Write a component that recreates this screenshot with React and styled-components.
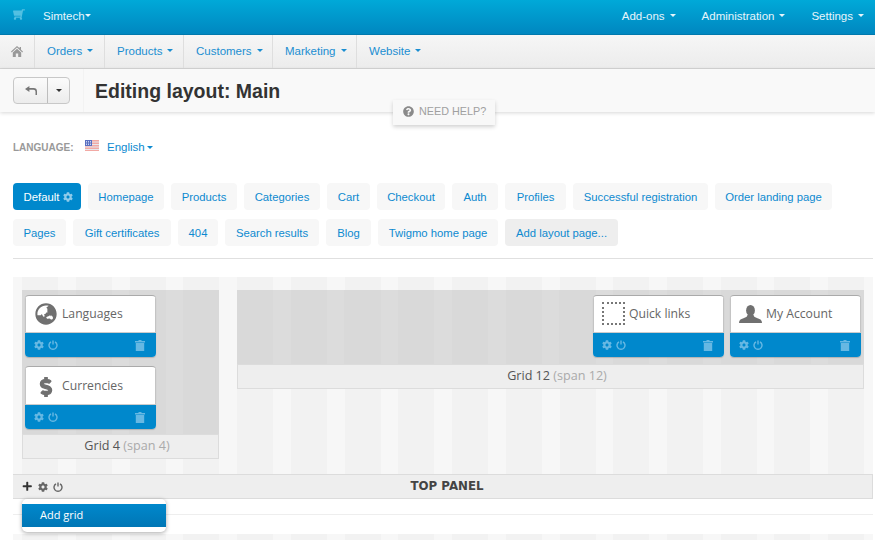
import React from "react"
import styled, {createGlobalStyle} from "styled-components"
import {FaCog, FaDollarSign, FaGlobeAsia, FaPlus, FaQuestionCircle, FaShoppingCart} from "react-icons/fa"

const GlobalStyle = createGlobalStyle`
  html, body {
    margin: 0;
    padding: 0;
    background: #fff;
  }
  body {
    width: 875px;
    height: 540px;
    overflow: hidden;
    font-family: "Liberation Sans", Arial, sans-serif;
    font-size: 11px;
    color: #333;
  }
`

const StyledApp = styled.div`
  position: relative;
  width: 875px;
  height: 540px;
  overflow: hidden;
`
const TopBar = styled.div`
  display: flex;
  justify-content: space-between;
  align-items: center;
  box-sizing: border-box;
  height: 35px;
  padding: 0 11px 3px 13px;
  background: linear-gradient(to bottom, #00a9d8, #0087c0);
  border-bottom: 1px solid #0079ad;
  color: #e6f5fb;
  font-size: 11.5px;
`
const TopGroup = styled.div`
  display: flex;
  align-items: center;
  gap: ${({$gap}) => $gap}px;
`
const CartIcon = styled(FaShoppingCart)`
  width: 12px;
  height: 11px;
  margin-top: -3px;
  color: #52c0e2;
  transform: scaleX(-1);
`
const TopItem = styled.span`
  display: inline-flex;
  align-items: center;
  gap: ${({$caretGap}) => $caretGap}px;
`
const Caret = styled.i`
  display: inline-block;
  width: 0;
  height: 0;
  border-left: 3.5px solid transparent;
  border-right: 3.5px solid transparent;
  border-top: 3.5px solid ${({$color}) => $color};
`
const MainNav = styled.div`
  display: flex;
  box-sizing: border-box;
  height: 34px;
  background: linear-gradient(to bottom, #f6f6f6, #ececec);
  border-bottom: 1px solid #d6d6d6;
`
const HomeCell = styled.div`
  display: flex;
  justify-content: center;
  align-items: center;
  box-sizing: border-box;
  width: 35px;
  padding-bottom: 1px;
  border-right: 1px solid #dedede;
  color: #999;
`
const NavItem = styled.div`
  display: flex;
  align-items: center;
  gap: 5px;
  box-sizing: border-box;
  width: ${({$width}) => $width}px;
  padding: 0 0 2px 12px;
  border-right: ${({$last}) => $last ? "none" : "1px solid #dedede"};
  color: #1a8ed1;
  font-size: 11.5px;
`
const ActionBar = styled.div`
  display: flex;
  align-items: center;
  box-sizing: border-box;
  height: 43px;
  padding-left: 13px;
  background: #f9f9f9;
  box-shadow: 0 1px 4px rgba(0, 0, 0, 0.16);
`
const BackGroup = styled.div`
  display: flex;
  box-sizing: border-box;
  width: 57px;
  height: 27px;
  border: 1px solid #c8c8c8;
  border-radius: 4px;
  background: linear-gradient(to bottom, #fbfbfb, #ececec);
`
const BackPart = styled.div`
  display: flex;
  justify-content: center;
  align-items: center;
  width: ${({$width}) => $width}px;
  border-right: ${({$divider}) => $divider ? "1px solid #bdbdbd" : "none"};
`
const ActionDivider = styled.div`
  width: 1px;
  height: 43px;
  margin: 0 11px 0 13px;
  background: #f3f3f3;
`
const Title = styled.h1`
  margin: 1px 0 0;
  font-size: 19.5px;
  font-weight: bold;
  color: #333;
`
const HelpTab = styled.div`
  position: absolute;
  top: 100px;
  left: 393px;
  display: flex;
  align-items: center;
  gap: 5px;
  box-sizing: border-box;
  width: 102px;
  height: 25px;
  padding: 0 0 3px 10px;
  background: #f8f8f8;
  box-shadow: 0 2px 4px rgba(0, 0, 0, 0.18);
  color: #a0a0a0;
  font-size: 10.8px;
  svg {
    color: #8a8a8a;
    font-size: 11px;
  }
`
const Content = styled.div`
  padding: 0 2px 0 13px;
`
const LanguageRow = styled.div`
  display: flex;
  align-items: center;
  height: 18px;
  margin: 26px 0 27px;
`
const LanguageLabel = styled.span`
  width: 72px;
  color: #999;
  font-size: 10px;
  font-weight: bold;
`
const Flag = styled.svg`
  width: 14px;
  height: 11px;
  margin: -4px 8px 0 0;
`
const LanguageLink = styled.span`
  display: inline-flex;
  align-items: center;
  gap: 2px;
  color: #0d8ad0;
  font-size: 11.5px;
`
const Tabs = styled.div`
  display: flex;
  flex-wrap: wrap;
  gap: 9px 7px;
  padding-bottom: 12px;
  border-bottom: 1px solid #e0e0e0;
`
const Tab = styled.div`
  display: flex;
  justify-content: center;
  align-items: center;
  gap: 4px;
  box-sizing: border-box;
  width: ${({$width}) => $width}px;
  height: 27px;
  padding-left: ${({$active}) => $active ? 3 : 0}px;
  border-radius: 4px;
  background: ${({$active, $muted}) => $active ? "#0088cc" : $muted ? "#eeeeee" : "#f7f7f7"};
  color: ${({$active}) => $active ? "#fff" : "#0d8ad0"};
  font-size: 11.3px;
  white-space: nowrap;
  svg {
    color: #8fcbea;
    font-size: 10px;
  }
`
const outerStripes = `repeating-linear-gradient(to right, #f7f7f7 0, #f7f7f7 9px, #f2f2f2 9px, #f2f2f2 45px, #f7f7f7 45px, #f7f7f7 53.75px)`
const innerStripes = `repeating-linear-gradient(to right, #d9d9d9 0, #d9d9d9 36px, #dcdcdc 36px, #dcdcdc 53.75px)`

const Stage = styled.div`
  display: flex;
  gap: 18px;
  box-sizing: border-box;
  height: 197px;
  margin-top: 18px;
  padding: 13px 9px 0;
  background: ${outerStripes};
`
const Grid = styled.div`
  display: flex;
  flex-direction: column;
  flex: ${({$span}) => $span === 4 ? "0 0 197px" : "1"};
  height: ${({$span}) => $span === 4 ? 169 : 99}px;
`
const GridBody = styled.div`
  flex: 1;
  display: flex;
  flex-direction: ${({$span}) => $span === 4 ? "column" : "row"};
  justify-content: ${({$span}) => $span === 4 ? "flex-start" : "flex-end"};
  gap: ${({$span}) => $span === 4 ? 9 : 6}px;
  padding: 5px 3px;
  background: ${innerStripes};
`
const GridLabel = styled.div`
  box-sizing: border-box;
  height: 25px;
  padding-left: 13px;
  border: 1px solid #dcdcdc;
  background: #eeeeee;
  text-align: center;
  line-height: 22px;
  font-family: "Open Sans", sans-serif;
  font-size: 12.6px;
  color: #555;
  span {
    color: #aaa;
  }
`
const Block = styled.div`
  display: flex;
  flex-direction: column;
  box-sizing: border-box;
  width: 131px;
  height: ${({$tall}) => $tall ? 63 : 62}px;
  border-radius: 4px;
  overflow: hidden;
  background: #fff;
  border-top: 1px solid #aaa;
  box-shadow: 0 1px 1px rgba(0, 0, 0, 0.18);
`
const BlockHead = styled.div`
  display: flex;
  align-items: center;
  flex: 1;
  padding-bottom: 1px;
  border-bottom: 1px solid #ccc;
  border-left: 1px solid #c4c4c4;
  border-right: 1px solid #c4c4c4;
  font-family: "Open Sans", sans-serif;
  font-size: 12.2px;
  color: #666;
`
const BlockIcon = styled.div`
  display: flex;
  justify-content: center;
  align-items: center;
  box-sizing: border-box;
  width: ${({$width}) => $width}px;
  padding-left: 3px;
  color: #707070;
  font-size: ${({$size}) => $size}px;
`
const DollarIcon = styled(FaDollarSign)`
  margin-top: 3px;
  stroke: currentColor;
  stroke-width: 30px;
`
const DottedSquare = styled.div`
  box-sizing: border-box;
  width: 23px;
  height: 23px;
  border: 2px dotted #777;
`
const BlockBar = styled.div`
  display: flex;
  align-items: center;
  gap: 4px;
  height: 24px;
  padding: 0 11px 0 9px;
  background: #0088cc;
  color: #66b8e3;
  font-size: 10px;
`
const TrashWrap = styled.span`
  display: flex;
  margin-left: auto;
`
const TopPanel = styled.div`
  position: relative;
  display: flex;
  align-items: center;
  box-sizing: border-box;
  height: 25px;
  padding: 0 9px;
  border: 1px solid #dcdcdc;
  border-left: none;
  background: #eeeeee;
`
const PanelTools = styled.div`
  display: flex;
  align-items: center;
  gap: 5px;
  color: #666;
  font-size: 10px;
`
const PlusIcon = styled(FaPlus)`
  color: #333;
  font-size: 10.5px;
`
const PanelTitle = styled.div`
  position: absolute;
  left: 9px;
  right: 0;
  top: 4px;
  text-align: center;
  font-family: "DejaVu Sans", sans-serif;
  font-size: 11.8px;
  font-weight: bold;
  color: #444;
`
const AddMenu = styled.div`
  position: absolute;
  z-index: 2;
  top: 24px;
  left: 9px;
  box-sizing: border-box;
  width: 144px;
  height: 33px;
  padding: 5px 0;
  border-radius: 5px;
  background: #fff;
  box-shadow: 0 1px 4px rgba(0, 0, 0, 0.35);
`
const AddMenuItem = styled.div`
  height: 23px;
  padding-left: 18px;
  line-height: 22px;
  background: linear-gradient(to bottom, #0088cc, #0076b5);
  color: #fff;
  font-family: "Open Sans", sans-serif;
  font-size: 11px;
`
const Rule = styled.div`
  height: 1px;
  margin-top: 15px;
  background: #eeeeee;
`
const NextStage = styled.div`
  height: 20px;
  margin-top: 19px;
  background: ${outerStripes};
`

const HomeIcon = () => (
  <svg width="12" height="11" viewBox="0 0 12 11" fill="currentColor">
    <path d="M6 0 0 5.600l.7.8L6 1.600l5.300 4.800.7-.8-2-1.800V1H8.600v1.200z" />
    <path d="M6 2.800 1.800 6.600V11h3V7.600h2.400V11h3V6.600z" />
  </svg>
)
const PowerIcon = () => (
  <svg width="10" height="10" viewBox="0 0 10 10" fill="none" stroke="currentColor" strokeWidth="1.4">
    <path d="M3 1.800a4 4 0 1 0 4 0" />
    <path d="M5 .4v4" />
  </svg>
)
const TrashIcon = () => (
  <svg width="10" height="11" viewBox="0 0 10 11" fill="currentColor">
    <path d="M3.500 0h3v1H10v1.400H0V1h3.500z" />
    <path d="M.8 3h8.400v8H.8z" />
  </svg>
)
const UserIcon = () => (
  <svg width="23" height="18" viewBox="0 0 23 18" fill="currentColor">
    <ellipse cx="11.500" cy="5.400" rx="4.400" ry="5.400" />
    <path d="M0 18c0-3 1.600-3.900 4.500-4.800 2.400-.8 3.700-1.400 3.900-3.200h6.200c.2 1.800 1.500 2.400 3.900 3.200 2.900.9 4.500 1.800 4.500 4.800z" />
  </svg>
)
const BackIcon = () => (
  <svg width="12" height="9" viewBox="0 0 12 9" fill="#777">
    <path d="M0 3 4.400 0v2h4.200C10.700 2 12 3.200 12 5.200V9h-1.500V5.800c0-1.300-.7-2-2.100-2H4.400V6z" />
  </svg>
)
const UsFlag = () => (
  <Flag viewBox="0 0 14 11">
    <rect width="14" height="11" fill="#f2a9a4" />
    <path d="M0 2h14M0 4.500h14M0 7h14M0 9.500h14" stroke="#e8e8ee" strokeWidth="1.200" />
    <rect width="7" height="6" fill="#5a6fc0" />
    <path d="M1 1.500h5M1 3h5M1 4.500h5" stroke="#c8d2f0" strokeDasharray="1 1" />
  </Flag>
)

const navItems = [["Orders", 70], ["Products", 79], ["Customers", 89], ["Marketing", 84], ["Website", 80]]
const tabs = [
  ["Homepage", 76], ["Products", 66], ["Categories", 76], ["Cart", 43], ["Checkout", 68], ["Auth", 46],
  ["Profiles", 61], ["Successful registration", 135], ["Order landing page", 117],
  ["Pages", 53], ["Gift certificates", 98], ["404", 40], ["Search results", 94], ["Blog", 45], ["Twigmo home page", 120],
]

const LayoutBlock = ({icon, iconWidth, iconSize, title, tall}) => (
  <Block $tall={tall}>
    <BlockHead>
      <BlockIcon $width={iconWidth} $size={iconSize}>{icon}</BlockIcon>
      {title}
    </BlockHead>
    <BlockBar>
      <FaCog />
      <PowerIcon />
      <TrashWrap><TrashIcon /></TrashWrap>
    </BlockBar>
  </Block>
)

const App = () => {
  return (
    <StyledApp>
      <GlobalStyle />
      <TopBar>
        <TopGroup $gap={18}>
          <CartIcon />
          <TopItem $caretGap={0}>Simtech<Caret $color="#e6f5fb" /></TopItem>
        </TopGroup>
        <TopGroup $gap={26}>
          <TopItem $caretGap={5}>Add-ons<Caret $color="#e6f5fb" /></TopItem>
          <TopItem $caretGap={5}>Administration<Caret $color="#e6f5fb" /></TopItem>
          <TopItem $caretGap={5}>Settings<Caret $color="#e6f5fb" /></TopItem>
        </TopGroup>
      </TopBar>
      <MainNav>
        <HomeCell><HomeIcon /></HomeCell>
        {navItems.map(([name, width], i) => (
          <NavItem key={name} $width={width} $last={i === navItems.length - 1}>
            {name}<Caret $color="#1a8ed1" />
          </NavItem>
        ))}
      </MainNav>
      <ActionBar>
        <BackGroup>
          <BackPart $width={34} $divider><BackIcon /></BackPart>
          <BackPart $width={21}><Caret $color="#333" /></BackPart>
        </BackGroup>
        <ActionDivider />
        <Title>Editing layout: Main</Title>
      </ActionBar>
      <HelpTab><FaQuestionCircle />NEED HELP?</HelpTab>
      <Content>
        <LanguageRow>
          <LanguageLabel>LANGUAGE:</LanguageLabel>
          <UsFlag />
          <LanguageLink>English<Caret $color="#0d8ad0" /></LanguageLink>
        </LanguageRow>
        <Tabs>
          <Tab $active $width={68}>Default<FaCog /></Tab>
          {tabs.map(([name, width]) => <Tab key={name + width} $width={width}>{name}</Tab>)}
          <Tab $muted $width={113}>Add layout page...</Tab>
        </Tabs>
        <Stage>
          <Grid $span={4}>
            <GridBody $span={4}>
              <LayoutBlock icon={<FaGlobeAsia />} iconWidth={36} iconSize={22} title="Languages" />
              <LayoutBlock icon={<DollarIcon />} iconWidth={36} iconSize={20} title="Currencies" tall />
            </GridBody>
            <GridLabel>Grid 4 <span>(span 4)</span></GridLabel>
          </Grid>
          <Grid $span={12}>
            <GridBody $span={12}>
              <LayoutBlock icon={<DottedSquare />} iconWidth={35} title="Quick links" />
              <LayoutBlock icon={<UserIcon />} iconWidth={35} title="My Account" />
            </GridBody>
            <GridLabel>Grid 12 <span>(span 12)</span></GridLabel>
          </Grid>
        </Stage>
        <TopPanel>
          <PanelTools>
            <PlusIcon />
            <FaCog />
            <PowerIcon />
          </PanelTools>
          <PanelTitle>TOP PANEL</PanelTitle>
          <AddMenu><AddMenuItem>Add grid</AddMenuItem></AddMenu>
        </TopPanel>
        <Rule />
        <NextStage />
      </Content>
    </StyledApp>
  )
}

export default App
